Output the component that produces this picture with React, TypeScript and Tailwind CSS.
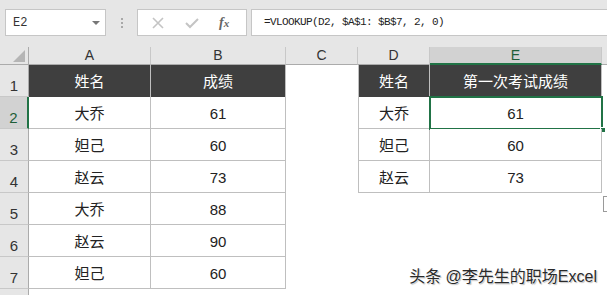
import React from 'react';

const cjk = "font-['Liberation_Sans','Noto_Sans_CJK_SC',sans-serif]";
const mono = "font-['Liberation_Mono','Noto_Sans_CJK_SC',monospace]";

const leftRows = [
  ['大乔', '61'],
  ['妲己', '60'],
  ['赵云', '73'],
  ['大乔', '88'],
  ['赵云', '90'],
  ['妲己', '60'],
];

const rightRows = [
  ['大乔', '61'],
  ['妲己', '60'],
  ['赵云', '73'],
];

// one data cell in a bordered table
const Cell: React.FC<{ children?: React.ReactNode; head?: boolean; className?: string }> = ({ children, head, className = '' }) => (
  <div
    className={`flex items-center justify-center pt-[3px] text-[15px] ${cjk} ${
      head ? 'bg-[#3f3f3f] text-white' : 'bg-white text-[#222]'
    } ${className}`}
  >
    {children}
  </div>
);

const App: React.FC = () => {
  const rows = [1, 2, 3, 4, 5, 6, 7];

  return (
    <div className="relative w-[607px] h-[295px] overflow-hidden bg-white">
      {/* formula bar */}
      <div className="h-[47px] bg-[#e6e6e6] flex items-center pl-[5px] pb-[2px]">
        <div className={`w-[101px] h-[27px] bg-white border border-[#c6c6c6] flex items-center justify-between pl-[7px] pr-[5px] text-[12px] text-[#333] ${mono}`}>
          <span>E2</span>
          <span className="w-0 h-0 border-l-[4px] border-r-[4px] border-t-[4px] border-l-transparent border-r-transparent border-t-[#777]" />
        </div>
        <div className="w-[31px] flex flex-col items-center gap-[2px]">
          <span className="w-[2px] h-[2px] bg-[#a8a8a8]" />
          <span className="w-[2px] h-[2px] bg-[#a8a8a8]" />
          <span className="w-[2px] h-[2px] bg-[#a8a8a8]" />
        </div>
        <div className="w-[110px] h-[27px] bg-white border border-[#c6c6c6] flex items-center">
          <svg width="12" height="12" viewBox="0 0 12 12" className="ml-[14px]">
            <path d="M1 1 L11 11 M11 1 L1 11" stroke="#c4c4c4" strokeWidth="1.6" />
          </svg>
          <svg width="14" height="12" viewBox="0 0 14 12" className="ml-[21px]">
            <path d="M1 6 L5 10 L13 2" stroke="#c4c4c4" strokeWidth="2" fill="none" />
          </svg>
          <span className="ml-[20px] text-[14px] italic text-[#666] font-['Liberation_Serif',serif] font-bold">
            f<span className="text-[11px]">x</span>
          </span>
        </div>
        <div className={`flex-1 ml-[4px] h-[27px] bg-white border border-[#c6c6c6] border-r-0 flex items-center pl-[12px] text-[11px] tracking-[-0.6px] text-[#222] ${mono}`}>
          =VLOOKUP(D2, $A$1: $B$7, 2, 0)
        </div>
      </div>

      {/* sheet grid */}
      <div className="grid grid-cols-[29px_122px_135px_72px_72px_172px_1fr] grid-rows-[18px_repeat(7,32px)_1fr] h-[248px]">
        {/* column headers */}
        <div className="bg-[#e6e6e6] border-r border-b border-[#ababab] flex items-end justify-end pr-[3px] pb-[2px]">
          <svg width="12" height="12" viewBox="0 0 12 12">
            <path d="M12 0 L12 12 L0 12 Z" fill="#b5b5b5" />
          </svg>
        </div>
        {['A', 'B', 'C', 'D'].map((c) => (
          <div key={c} className={`bg-[#e6e6e6] border-r border-b border-r-[#c8c8c8] border-b-[#ababab] flex items-end justify-center text-[14px] text-[#333] leading-[17px] ${cjk}`}>
            {c}
          </div>
        ))}
        <div className={`bg-[#d2d2d2] border-r border-r-[#c8c8c8] border-b-2 border-b-[#217346] flex items-end justify-center text-[14px] text-[#1e5e38] leading-[16px] ${cjk}`}>
          E
        </div>
        <div className="bg-[#e6e6e6] border-b border-[#ababab]" />

        {rows.map((r) => {
          const active = r === 2;
          const cells: React.ReactNode[] = [];
          cells.push(
            <div
              key={`h${r}`}
              className={`border-b border-b-[#c8c8c8] flex items-end justify-center pb-[2px] text-[15px] leading-[16px] ${cjk} ${
                active ? 'bg-[#d2d2d2] text-[#1e5e38] border-r-2 border-r-[#217346]' : 'bg-[#e6e6e6] text-[#333] border-r border-r-[#ababab]'
              }`}
            >
              {r}
            </div>
          );
          // A, B
          const leftBorder = 'border-r border-b border-[#bfbfbf]';
          if (r === 1) {
            cells.push(<Cell key={`a${r}`} head className="border-r border-[#bfbfbf]">姓名</Cell>);
            cells.push(<Cell key={`b${r}`} head className="border-r border-[#bfbfbf]">成绩</Cell>);
          } else {
            const [n, s] = leftRows[r - 2];
            cells.push(<Cell key={`a${r}`} className={leftBorder}>{n}</Cell>);
            cells.push(<Cell key={`b${r}`} className={leftBorder}>{s}</Cell>);
          }
          // C
          cells.push(<div key={`c${r}`} className="bg-white" />);
          // D, E
          if (r === 1) {
            cells.push(<Cell key={`d${r}`} head className="border-l border-r border-[#bfbfbf]">姓名</Cell>);
            cells.push(<Cell key={`e${r}`} head className="border-r border-[#bfbfbf]">第一次考试成绩</Cell>);
          } else if (r <= 4) {
            const [n, s] = rightRows[r - 2];
            cells.push(<Cell key={`d${r}`} className="border-l border-r border-b border-[#bfbfbf]">{n}</Cell>);
            cells.push(
              <div key={`e${r}`} className="relative">
                <Cell className="h-full border-r border-b border-[#bfbfbf]">{s}</Cell>
                {r === 2 && (
                  <>
                    <div className="absolute -left-[1px] -top-[1px] -right-[1px] -bottom-[1px] border-2 border-[#217346]" />
                    <div className="absolute -right-[4px] -bottom-[4px] w-[6px] h-[6px] bg-[#217346] border border-white" />
                  </>
                )}
              </div>
            );
          } else {
            cells.push(<div key={`d${r}`} className="bg-white" />);
            cells.push(<div key={`e${r}`} className="bg-white" />);
          }
          cells.push(<div key={`f${r}`} className="bg-white" />);
          return cells;
        })}

        {/* below row 7 */}
        <div className="bg-[#e6e6e6] border-r border-[#ababab]" />
        <div className="col-span-6 bg-white" />
      </div>

      {/* paste options tag */}
      <div className="absolute left-[603px] top-[196px] w-[8px] h-[16px] border border-[#9a9a9a] bg-white" />

      {/* watermark */}
      <div
        className={`absolute right-[10px] bottom-[6px] text-[16px] text-[#2a2a2a] ${cjk}`}
        style={{ textShadow: '0 0 2px #fff, 0 0 2px #fff, 1px 1px 1px rgba(0,0,0,0.35)' }}
      >
        头条 @李先生的职场Excel
      </div>
    </div>
  );
};

export default App;
